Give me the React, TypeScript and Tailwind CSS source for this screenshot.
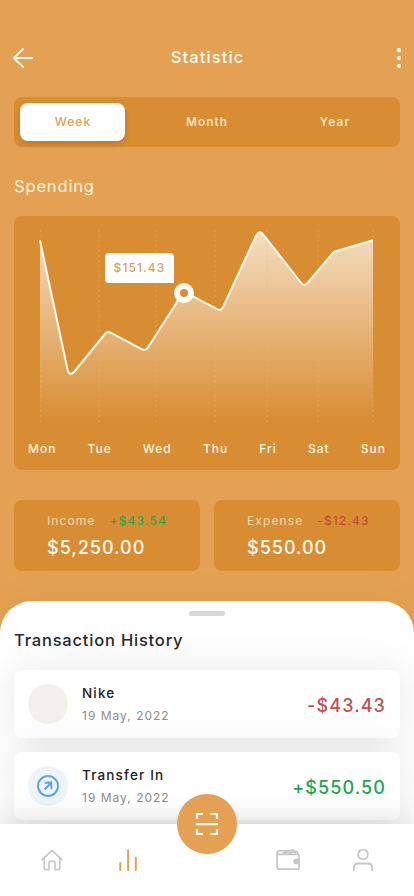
import React from "react";

const days = ["Mon", "Tue", "Wed", "Thu", "Fri", "Sat", "Sun"];
const gridLines = [26.5, 85, 142, 201, 253, 304, 359];

const LINE =
  "M26 24.5 L53.6 154 Q54.6 157.8 56.5 157.8 Q58.5 157.8 60.5 155.5 L91 118 Q93.5 115 97 116.8 L127.5 133.2 Q131.5 135.5 134 131.5 L163 86 Q168 74 177 79.5 L203 93 Q207 95.4 208.8 91.5 L242.2 19.5 Q245.5 13.5 249.5 18.8 L286.8 66.5 Q290.2 71 294 66.5 L318.5 37.5 Q320 35.7 322.5 35 L359 24.3";

function Chart() {
  return (
    <section className="relative mx-3.5 mt-[18px] h-[254px] shrink-0 rounded-lg bg-[#d98d32]">
      <svg width="386" height="220" viewBox="0 0 386 220" fill="none" className="block">
        <defs>
          <linearGradient id="area" x1="0" y1="16" x2="0" y2="206" gradientUnits="userSpaceOnUse">
            <stop offset="0" stopColor="#fff" stopOpacity="0.7" />
            <stop offset="1" stopColor="#fff" stopOpacity="0" />
          </linearGradient>
        </defs>
        <path d={`${LINE} V206 H26 Z`} fill="url(#area)" />
        {gridLines.map((x) => (
          <path key={x} d={`M${x} 14V208`} stroke="#e9bc7d" strokeOpacity="0.28" strokeWidth="1.4" strokeDasharray="2 3" />
        ))}
        <path d={LINE} stroke="#fffaf0" strokeWidth="2" />
        <circle cx="170" cy="77" r="7" fill="#d98d32" stroke="#fff" strokeWidth="6" />
      </svg>
      <div className="absolute left-[91px] top-[37px] flex h-[30px] w-[69px] items-center justify-center rounded rounded-br-none bg-white text-[12px] font-medium tracking-[1.1px] text-[#dfa05a]">
        $151.43
      </div>
      <div className="flex justify-between pl-3.5 pr-3.5 pt-1 text-[12px] font-medium leading-[18px] tracking-[1px] text-[#fff6e3]">
        {days.map((d) => (
          <span key={d}>{d}</span>
        ))}
      </div>
    </section>
  );
}

function Summary({ label, change, amount, tone }: { label: string; change: string; amount: string; tone: string }) {
  return (
    <div className="h-[71px] w-[186px] rounded-lg bg-[#d98d32] pl-[33px] pt-3">
      <div className="flex gap-3.5 text-[12px] leading-[18px] tracking-[1.1px]">
        <span className="text-[#f5d9ae]">{label}</span>
        <span className={`font-medium ${tone}`}>{change}</span>
      </div>
      <div className="mt-[5px] text-[18px] font-medium leading-[26px] tracking-[1px] text-[#fffaf0]">{amount}</div>
    </div>
  );
}

function Transaction({ name, amount, tone, icon }: { name: string; amount: string; tone: string; icon: React.ReactNode }) {
  return (
    <div className="flex h-[68px] items-center rounded-lg bg-white pl-3.5 pr-3.5 shadow-[0_0_40px_rgba(0,0,0,0.1)]">
      {icon}
      <div className="ml-3.5 flex-1">
        <div className="text-[13.5px] font-medium leading-[20px] tracking-[1.15px] text-[#222]">{name}</div>
        <div className="mt-1 text-[12px] leading-[18px] tracking-[1px] text-[#8d8d8d]">19 May, 2022</div>
      </div>
      <div className={`pt-0.5 text-[18px] font-medium tracking-[1.1px] ${tone}`}>{amount}</div>
    </div>
  );
}

export default function App() {
  return (
    <div className="relative flex h-[896px] w-[414px] flex-col overflow-hidden bg-[#e4a153] font-['Inter','Liberation_Sans',sans-serif]">
      <header className="mt-[46px] flex h-6 shrink-0 items-center justify-between pl-3 pr-3">
        <svg width="22" height="22" viewBox="0 0 22 22" fill="none" stroke="#fffaf0" strokeWidth="1.8" strokeLinecap="round" strokeLinejoin="round">
          <path d="M20.3 11H1.8M11.3 1.8L1.8 11l9.5 9.2" />
        </svg>
        <h1 className="pb-0.5 pl-px text-[16.5px] font-medium leading-6 tracking-[1.1px] text-[#fffaf0]">Statistic</h1>
        <svg width="22" height="22" viewBox="-16 0 22 22" fill="#fffdf8">
          <circle cx="3" cy="3.2" r="2.1" />
          <circle cx="3" cy="11.1" r="2.1" />
          <circle cx="3" cy="19" r="2.1" />
        </svg>
      </header>

      <nav className="mx-3.5 mt-[27px] flex h-[50px] shrink-0 rounded-lg bg-[#d98d32] p-1.5 text-[12px] font-medium tracking-[1.1px] text-[#fff2da]">
        <button className="h-[38px] w-[105px] rounded-lg bg-white pl-px text-[#dfa05a] shadow-[0_3px_6px_rgba(0,0,0,0.14)]">Week</button>
        <button className="ml-[29px] w-[105px] pl-px">Month</button>
        <button className="ml-[23px] w-[105px] pl-px">Year</button>
      </nav>

      <h2 className="mt-[27px] pl-3.5 text-[16.5px] leading-6 tracking-[0.85px] text-[#fff6e3]">Spending</h2>
      <Chart />

      <section className="mx-3.5 mt-[30px] flex shrink-0 gap-3.5">
        <Summary label="Income" change="+$43.54" amount="$5,250.00" tone="text-[#2ca74a]" />
        <Summary label="Expense" change="-$12.43" amount="$550.00" tone="text-[#c44d38]" />
      </section>

      <section className="mt-[30px] h-[223px] shrink-0 rounded-t-[32px] bg-white px-3.5 pt-2.5 shadow-[0_0_40px_rgba(0,0,0,0.05)]">
        <div className="mx-auto h-[5px] w-9 rounded-full bg-[#d8d8d8]" />
        <h2 className="mt-3 text-[16.5px] font-medium leading-6 tracking-[0.8px] text-[#292929]">Transaction History</h2>
        <div className="mt-[18px] flex flex-col gap-3.5">
          <Transaction name="Nike" amount="-$43.43" tone="text-[#c4504b]" icon={<div className="size-10 rounded-full bg-[#f3efea]" />} />
          <Transaction
            name="Transfer In"
            amount="+$550.50"
            tone="text-[#1ca653]"
            icon={
              <div className="flex size-10 items-center justify-center rounded-full bg-[#edf4fa]">
                <svg width="24" height="24" viewBox="0 0 24 24" fill="none" stroke="#63a4e2" strokeWidth="2">
                  <circle cx="12" cy="12" r="10" />
                  <path d="M8.7 15.5L14.8 9M8.5 8.8l6.6-.4.4 6.7" />
                </svg>
              </div>
            }
          />
        </div>
      </section>

      <footer className="relative h-[72px] shrink-0 bg-white shadow-[0_-4px_30px_rgba(0,0,0,0.14)]">
        <div className="flex items-start pl-10 pt-6 text-[#c6c6c6]">
          <svg width="24" height="24" viewBox="0 0 24 24" fill="none" stroke="currentColor" strokeWidth="1.6" strokeLinecap="round" strokeLinejoin="round">
            <path d="M2 11.8L12 2.3l10 9.5M4.3 10.2v10.2q0 1.2 1.2 1.2H9v-7q0-1.2 1.2-1.2h3.6q1.2 0 1.2 1.2v7h3.5q1.2 0 1.2-1.2V10.2" />
          </svg>
          <svg className="ml-[52px]" width="24" height="24" viewBox="0 0 24 24" fill="none" stroke="#dda454" strokeWidth="2" strokeLinecap="round">
            <path d="M4.3 15v7M12.1 2.2V22M19.8 9.7V22" />
          </svg>
          <svg className="ml-[136px]" width="24" height="24" viewBox="0 0 24 24" fill="none" stroke="currentColor" strokeWidth="1.7" strokeLinejoin="round">
            <path d="M1.1 4.5v14.7q0 2 2 2h18q2 0 2-2V8.3q0-2-2-2H3q-1.9 0-1.9-1.8 0-1.6 2-1.6h9.4M6 5.9l11-4 1.2 1.3M12 6l6.2-2.7 1.4 2.5M18 3.4h2.3q1.4.4 1.4 2.8" />
            <path d="M23 11.5h-2.8a2 2 0 000 4H23z" fill="currentColor" />
          </svg>
          <svg className="ml-[51px]" width="24" height="24" viewBox="0 0 24 24" fill="none" stroke="currentColor" strokeWidth="1.8" strokeLinecap="round">
            <circle cx="12" cy="6.4" r="4.8" />
            <path d="M2.8 22v-2.2q0-4.3 4.3-4.3h9.8q4.3 0 4.3 4.3V22" />
          </svg>
        </div>
        <button className="absolute -top-[30px] left-[177px] flex size-[60px] items-center justify-center rounded-full bg-[#e4a153]">
          <svg width="24" height="24" viewBox="0 0 24 24" fill="none" stroke="#fffaf0" strokeWidth="2.2">
            <path d="M2 7V2h6M15.5 2H22v5M2 17v5h6M15.5 22H22v-5M1 12.1h22" />
          </svg>
        </button>
      </footer>
    </div>
  );
}
